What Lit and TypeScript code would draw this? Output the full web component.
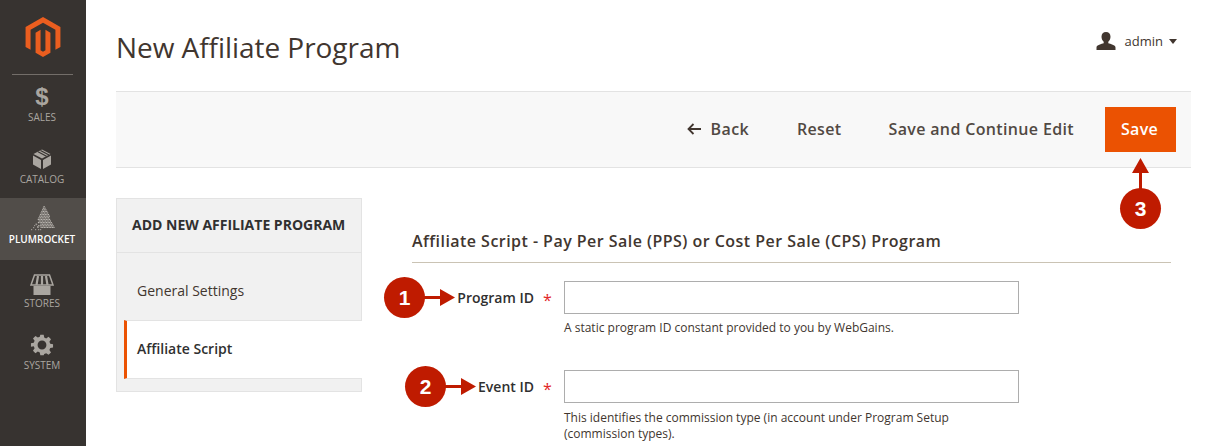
import { LitElement, html, css, svg } from "lit";
import { customElement } from "lit/decorators.js";

const ICON = "#aaa6a0";

function pyramidDots() {
  const dots: unknown[] = [];
  for (let r = 0; r < 14; r++) {
    const y = 1 + r * 1.6;
    const half = 0.5 + r * 0.72;
    for (let x = -half; x <= half + 0.01; x += 1.6) {
      const px = 14 + x;
      const cut = r > 8 && x < -half + (r - 8) * 1.1 && (Math.round(x * 5 + r * 3) % 3 !== 0);
      if (!cut) dots.push(svg`<rect x="${px.toFixed(2)}" y="${y.toFixed(2)}" width="1.2" height="1.2" fill="#bdb9b4"/>`);
    }
  }
  const extra = [[3, 22], [1, 24], [5, 24], [7, 21], [4, 20], [8, 24], [6, 19], [10, 24]];
  for (const [x, y] of extra) dots.push(svg`<rect x="${x}" y="${y}" width="1.2" height="1.2" fill="#9a9691"/>`);
  return dots;
}

const navIcons: Record<string, unknown> = {
  sales: svg`<text x="12" y="20" text-anchor="middle" font-family="Liberation Sans" font-weight="700" font-size="24" fill="${ICON}">$</text>`,
  catalog: svg`<path d="M12 2.500 20.500 7 12 11.500 3.500 7Z" fill="${ICON}"/><path d="M3 8.500 11 13v9l-8-4.500ZM21 8.500 13 13v9l8-4.500Z" fill="${ICON}"/><path d="M8 4.800 16.500 9.300M10.500 3.500 19 8" stroke="#373330" stroke-width="1.200"/>`,
  plumrocket: pyramidDots(),
  stores: svg`<g transform="translate(0 3)"><path d="M4.500 1h15L23 11H1Z" fill="none" stroke="${ICON}" stroke-width="1.500"/><path d="M8 2 6.500 11M12 2v9M16 2l1.500 9" stroke="${ICON}" stroke-width="2.200"/><path d="M3.500 12h17v9h-17Z" fill="${ICON}"/></g>`,
  system: svg`<path transform="translate(1.800 1.800) scale(.85)" fill-rule="evenodd" fill="${ICON}" d="M10 0h4l.6 3.300 2.300 1 2.800-1.900 2.900 2.900-1.900 2.800 1 2.300 3.300.6v4l-3.300.6-1 2.300 1.900 2.800-2.900 2.900-2.800-1.900-2.300 1L14 24h-4l-.6-3.300-2.300-1-2.800 1.900-2.900-2.900 1.900-2.800-1-2.300L-1 14v-4l3.300-.6 1-2.300-1.900-2.800 2.900-2.900 2.800 1.900 2.300-1ZM12 6.800a5.200 5.200 0 1 0 0 10.400 5.200 5.200 0 0 0 0-10.400Z"/>`,
};

@customElement("app-root")
export class AppRoot extends LitElement {
  static styles = css`
    :host { display: block; width: 1206px; height: 446px; overflow: hidden; position: relative; background: #fff; font-family: "Open Sans", sans-serif; color: #41362f; }
    .layout { display: grid; grid-template-columns: 86px 1fr; height: 446px; }
    .side { background: #373330; display: flex; flex-direction: column; align-items: stretch; }
    .logo { display: flex; justify-content: center; padding: 17px 1px 0 0; height: 74px; box-sizing: border-box; }
    .rule { height: 1px; background: #736e69; margin: 0 13px 0 12px; }
    .nav { display: flex; flex-direction: column; align-items: center; height: 62px; box-sizing: border-box; padding: 11px 2px 0 0; font-size: 10px; line-height: 14px; color: #aaa6a0; }
    .nav svg { display: block; width: 24px; height: 24px; overflow: visible; }
    .nav span { display: block; margin-top: 1px; }
    .nav.first { padding-top: 10px; height: 61px; }
    .nav.active { background: #514d49; color: #fff; font-weight: 600; padding-top: 7px; }
    .nav.active span { margin-top: 3px; }
    .main { padding-right: 15px; padding-left: 30px; display: flex; flex-direction: column; min-width: 0; }
    .head { height: 91px; display: flex; justify-content: space-between; align-items: flex-start; }
    h1 { margin: 28px 0 0; font-size: 28px; font-weight: 400; line-height: 38px; letter-spacing: -.05px; color: #41362f; }
    .user { display: flex; align-items: center; gap: 9px; margin: 31px 14px 0 0; font-size: 13px; line-height: 20px; color: #41362f; }
    .user svg { width: 20px; height: 20px; display: block; }
    .caret { width: 0; height: 0; border: 4.500px solid transparent; border-top: 5px solid #41362f; border-bottom: 0; margin-left: -4px; }
    .user span { margin-right: 1px; }
    .bar { height: 77px; box-sizing: border-box; background: #f8f8f8; border-top: 1px solid #e3e3e3; border-bottom: 1px solid #e3e3e3; display: flex; justify-content: flex-end; align-items: center; gap: 47px; padding: 0 15px 2px 0; font-size: 16px; font-weight: 600; letter-spacing: .35px; color: #514943; }
    .bar .back { display: flex; align-items: center; gap: 9px; margin-right: 1px; }
    .bar .back svg { width: 15px; height: 12px; display: block; }
    .save { width: 71px; height: 45px; margin: 2px 0 0 -16px; padding: 0 2px 2px 0; box-sizing: border-box; background: #eb5202; color: #fff; display: flex; align-items: center; justify-content: center; }
    .body { display: grid; grid-template-columns: 246px 1fr; column-gap: 50px; margin-top: 30px; }
    .panel { background: #f1f1f1; border: 1px solid #e3e3e3; box-sizing: border-box; height: 194px; }
    .panel .title { height: 54px; box-sizing: border-box; padding: 0 0 2px 15px; border-bottom: 1px solid #e3e3e3; display: flex; align-items: center; font-size: 14px; font-weight: 700; color: #303030; }
    .tab { display: flex; align-items: center; font-size: 14px; padding-left: 20px; color: #41362f; }
    .tab.general { height: 67px; padding-top: 8px; box-sizing: border-box; }
    .tab.active { height: 59px; margin-left: 7px; padding: 0 0 3px 10px; border-left: 3px solid #eb5202; background: #fff; border-top: 1px solid #e3e3e3; border-bottom: 1px solid #e3e3e3; box-sizing: border-box; font-weight: 600; margin-right: -1px; color: #303030; }
    .form { padding-right: 20px; }
    h2 { margin: 32px 0 0; padding-bottom: 10px; font-size: 16px; line-height: 22px; font-weight: 600; letter-spacing: .46px; color: #41362f; border-bottom: 1px solid #cac3b4; }
    .field { display: grid; grid-template-columns: 122px 30px 455px; }
    .field.one { margin-top: 18px; }
    .field.two { margin-top: 34px; }
    .field label { text-align: right; font-size: 14px; font-weight: 600; line-height: 33px; color: #303030; }
    .star { color: #e22626; font-size: 16px; font-weight: 400; line-height: 38px; margin-bottom: -5px; padding-left: 9px; }
    .input { height: 33px; box-sizing: border-box; border: 1px solid #adadad; background: #fff; }
    .note { grid-column: 3; margin-top: 6px; font-size: 12px; line-height: 16px; color: #41362f; }
    .field.two .note { margin-top: 7px; }
    .pin { position: absolute; width: 41px; height: 41px; border-radius: 50%; background: #bf1b00; color: #fff; font: 700 21px/41px "Liberation Sans", sans-serif; text-align: center; }
    .arrow { position: absolute; display: block; overflow: visible; }
  `;

  private nav(key: string, label: string, cls = "") {
    return html`<div class="nav ${cls}"><svg viewBox="0 0 24 24">${navIcons[key]}</svg><span>${label}</span></div>`;
  }

  render() {
    return html`
      <div class="layout">
        <aside class="side">
          <div class="logo">
            <svg width="36" height="40" viewBox="0 0 24.400 28"><path fill="#eb5e1f" d="M12.200 0 0 7v14l3.500 2V9l8.700-5 8.700 5v14l3.500-2V7Z"/><path fill="#eb5e1f" d="M13.900 23.300 12.200 24.300 10.500 23.300V9L7 11v14l5.200 3 5.200-3V11l-3.500-2Z"/></svg>
          </div>
          <div class="rule"></div>
          ${this.nav("sales", "SALES", "first")}
          ${this.nav("catalog", "CATALOG")}
          ${this.nav("plumrocket", "PLUMROCKET", "active")}
          ${this.nav("stores", "STORES")}
          ${this.nav("system", "SYSTEM")}
        </aside>
        <main class="main">
          <header class="head">
            <h1>New Affiliate Program</h1>
            <div class="user">
              <svg viewBox="0 0 20 20"><path fill="#41362f" d="M10 1c2.800 0 4.500 2 4.500 4.800 0 2.200-1 4-2.200 5v1.500c2 .8 7.200 1.500 7.200 4.200V19H.5v-2.500c0-2.700 5.200-3.400 7.200-4.200v-1.500c-1.200-1-2.200-2.800-2.200-5C5.500 3 7.200 1 10 1Z"/></svg>
              <span>admin</span><i class="caret"></i>
            </div>
          </header>
          <div class="bar">
            <span class="back"><svg viewBox="0 0 15 12"><path d="M14 6H2M6.500 1 1.500 6l5 5" fill="none" stroke="#41362f" stroke-width="1.800"/></svg>Back</span>
            <span>Reset</span>
            <span>Save and Continue Edit</span>
            <span class="save">Save</span>
          </div>
          <div class="body">
            <nav class="panel">
              <div class="title">ADD NEW AFFILIATE PROGRAM</div>
              <div class="tab general">General Settings</div>
              <div class="tab active">Affiliate Script</div>
            </nav>
            <section class="form">
              <h2>Affiliate Script - Pay Per Sale (PPS) or Cost Per Sale (CPS) Program</h2>
              <div class="field one">
                <label>Program ID</label><span class="star">*</span><div class="input"></div>
                <div class="note">A static program ID constant provided to you by WebGains.</div>
              </div>
              <div class="field two">
                <label>Event ID</label><span class="star">*</span><div class="input"></div>
                <div class="note">This identifies the commission type (in account under Program Setup<br />(commission types).</div>
              </div>
            </section>
          </div>
        </main>
      </div>
      <div class="pin" style="left:384px;top:277px">1</div>
      <svg class="arrow" style="left:424px;top:289px" width="32" height="17"><path d="M0 7h16V0l15 8.500L16 17v-7H0Z" fill="#bf1b00"/></svg>
      <div class="pin" style="left:405px;top:366px">2</div>
      <svg class="arrow" style="left:445px;top:378px" width="32" height="17"><path d="M0 7h16V0l15 8.500L16 17v-7H0Z" fill="#bf1b00"/></svg>
      <div class="pin" style="left:1120px;top:188px">3</div>
      <svg class="arrow" style="left:1132px;top:158px" width="17" height="32"><path d="M7 32V15H0L8.500 0 17 15H10v17Z" fill="#bf1b00"/></svg>
    `;
  }
}
